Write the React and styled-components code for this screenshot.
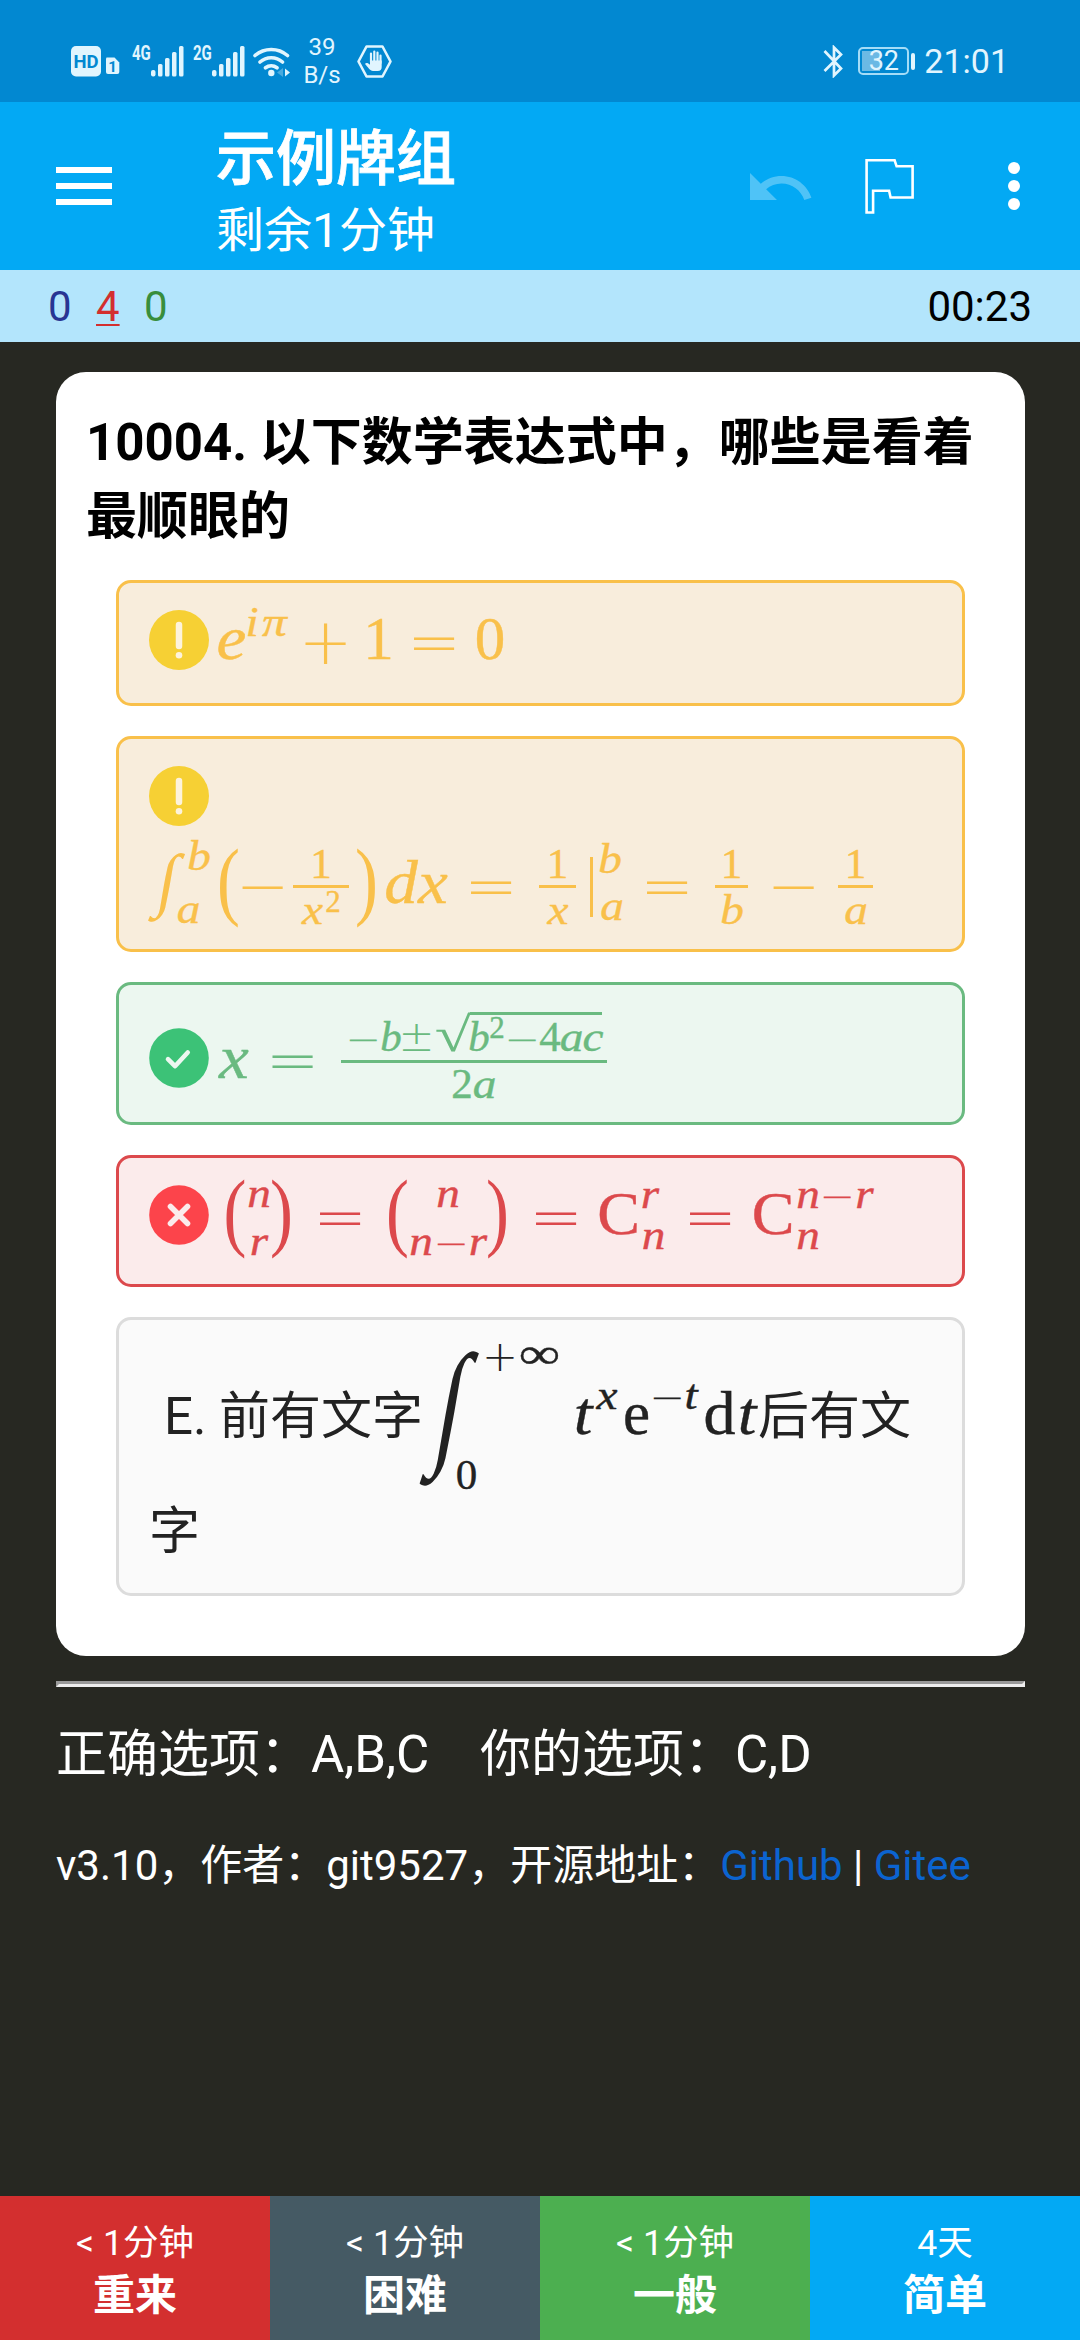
import React from "react";
import styled, { createGlobalStyle } from "styled-components";

const sans = `Roboto, "Noto Sans CJK SC", sans-serif`;

const GlobalStyle = createGlobalStyle`
  * { box-sizing: border-box; }
  body { margin: 0; background: #272822; }
`;

const Screen = styled.div`
  display: flex;
  flex-direction: column;
  width: 1080px;
  height: 2340px;
  background: #272822;
  font-family: ${sans};
  color: #fff;
  overflow: hidden;
`;

/* ---------- status bar ---------- */
const StatusBar = styled.header`
  display: flex;
  align-items: center;
  height: 102px;
  padding: 20px 71px 0 71px;
  background: #0288d1;
  color: #e1f5fe;
`;
const StatusIcon = styled.svg`
  display: block;
  flex: none;
  margin-left: ${(p) => p.$gap || 0}px;
`;
const NetTag = styled.span`
  width: 19px;
  margin-left: ${(p) => p.$gap}px;
  align-self: flex-start;
  margin-top: 23px;
  font-size: 20px;
  font-weight: 700;
  line-height: 20px;
  white-space: nowrap;
  transform: scaleX(0.75);
  transform-origin: left;
`;
const Speed = styled.div`
  width: 40px;
  margin-left: 11px;
  font-size: 24px;
  line-height: 28px;
  text-align: center;
`;
const Spacer = styled.div`
  flex: 1;
`;
const Battery = styled.div`
  display: flex;
  align-items: center;
  justify-content: center;
  width: 51px;
  height: 28px;
  margin-left: 14px;
  border: 2px solid #a5dcf7;
  border-radius: 5px;
  background: linear-gradient(90deg, #6bb9e4 18px, transparent 18px) no-repeat 2px 2px / 40px 20px;
  font-size: 27px;
  line-height: 24px;
`;
const BatteryCap = styled.div`
  width: 4px;
  height: 17px;
  margin-left: 2px;
  border-radius: 2px;
  background: #e1f5fe;
`;
const Clock = styled.span`
  margin-left: 9px;
  font-size: 34px;
  line-height: 40px;
`;

/* ---------- toolbar ---------- */
const Toolbar = styled.div`
  display: flex;
  align-items: center;
  height: 168px;
  padding: 0 60px 0 56px;
  background: #03a9f4;
`;
const MenuButton = styled.div`
  display: grid;
  gap: 10px;
  width: 56px;
  margin-right: 104px;
`;
const MenuBar = styled.span`
  height: 6px;
  background: #fff;
`;
const Titles = styled.div`
  flex: 1;
  padding-top: 10px;
`;
const DeckTitle = styled.h1`
  margin: 0;
  font-size: 60px;
  font-weight: 500;
  line-height: 80px;
  -webkit-text-stroke: 0.8px currentColor;
`;
const DeckSubtitle = styled.div`
  font-size: 48px;
  line-height: 62px;
`;
const Action = styled.svg`
  display: block;
  margin-left: ${(p) => p.$gap || 0}px;
`;

/* ---------- counters ---------- */
const Counters = styled.div`
  display: flex;
  align-items: center;
  gap: 24.4px;
  height: 72px;
  padding: 2px 48px 0;
  background: #b3e5fc;
  font-size: 42px;
  line-height: 50px;
`;
const Count = styled.span`
  color: ${(p) => p.$color};
  text-decoration: ${(p) => (p.$active ? "underline" : "none")};
  text-decoration-thickness: 2px;
  text-underline-offset: 3px;
`;
const Timer = styled.span`
  margin-left: auto;
  color: #000;
`;

/* ---------- card ---------- */
const Content = styled.main`
  flex: 1;
  padding: 30px 55px 0 56px;
`;
const Card = styled.section`
  height: 1284px;
  padding: 34px 30px 0;
  border-radius: 30px;
  background: #fff;
`;
const Question = styled.h2`
  margin: 0 0 26px;
  color: #000;
  font-size: 51px;
  font-weight: 700;
  line-height: 74px;
`;
const Options = styled.div`
  display: grid;
  gap: 30px;
  padding: 0 30px;
`;
const tones = {
  missed: ["#f9c04a", "#f8eddc"],
  right: ["#6aba80", "#ecf7f0"],
  wrong: ["#dc494c", "#fbebeb"],
  plain: ["#dcdcdc", "#fafafa"],
};
const Option = styled.div`
  display: flex;
  flex-wrap: wrap;
  align-items: flex-start;
  align-content: flex-start;
  height: ${(p) => p.$height}px;
  padding: 27px 27px 27px 30px;
  border: 3px solid ${(p) => tones[p.$tone][0]};
  border-radius: 15px;
  background: ${(p) => tones[p.$tone][1]};
  color: ${(p) => (p.$tone === "plain" ? "#222" : tones[p.$tone][0])};
`;
const Mark = styled.svg`
  display: block;
  flex: none;
  margin-top: ${(p) => p.$top || 0}px;
`;

/* ---------- formulas: everything hangs from one baseline ---------- */
const Formula = styled.div`
  flex: ${(p) => (p.$full ? "0 0 100%" : "0 0 auto")};
  height: ${(p) => p.$height}px;
  font-family: "Liberation Serif", serif;
  font-size: 60px;
  line-height: 0;
  white-space: nowrap;
  &::before {
    content: "";
    display: inline-block;
    width: 0;
    height: ${(p) => p.$ascent}px;
  }
`;
const Glyph = styled.span`
  display: inline-flex;
  justify-content: center;
  width: ${(p) => p.$w}px;
  margin-left: ${(p) => p.$g || 0}px;
  vertical-align: ${(p) => p.$up || 0}px;
  font-size: ${(p) => (p.$small ? 43 : p.$tiny ? 31 : 61)}px;
  transform: scaleX(${(p) => p.$sx || 1});
  -webkit-text-stroke: 0.4px currentColor;
`;
const Var = styled(Glyph)`
  font-style: italic;
  transform: scaleX(${(p) => p.$sx || 1.1});
`;
const Op = styled(Glyph)`
  font-family: "DejaVu Sans", sans-serif;
  font-weight: 200;
  font-size: ${(p) => (p.$small ? 43 : 64)}px;
  vertical-align: ${(p) => (p.$up || 0) - (p.$small ? 3 : 4.5)}px;
  -webkit-text-stroke: 0;
`;
const Big = styled(Glyph)`
  font-size: ${(p) => p.$size}px;
  -webkit-text-stroke: 0;
`;
const Integral = styled(Big)`
  transform: skewX(-10deg) scaleX(${(p) => p.$sx});
`;
const Stack = styled.span`
  display: inline-block;
  width: ${(p) => p.$w}px;
  margin-left: ${(p) => p.$g || 0}px;
`;
const Level = styled.span`
  display: inline-block;
  width: 100%;
  margin-right: -100%;
  text-align: ${(p) => p.$align || "center"};
  vertical-align: ${(p) => p.$up}px;
`;
const Rule = styled.span`
  display: inline-block;
  width: ${(p) => p.$w}px;
  height: ${(p) => p.$h || 3}px;
  margin-left: ${(p) => p.$g || 0}px;
  margin-right: ${(p) => (p.$over ? -p.$w : 0)}px;
  vertical-align: ${(p) => p.$up}px;
  background: currentColor;
`;
const Words = styled.span`
  display: inline-block;
  width: ${(p) => (p.$w ? `${p.$w}px` : "auto")};
  margin-left: ${(p) => p.$g || 0}px;
  font-family: ${sans};
  font-size: 51px;
`;

const Equals = ({ g, w = 40 }) => <Op $g={g} $w={w}>=</Op>;
const Frac = ({ g, w, num, den }) => (
  <Stack $g={g} $w={w}>
    <Level $up={25}>{num}</Level>
    <Rule $w={w} $up={15} $over />
    <Level $up={-20.5}>{den}</Level>
  </Stack>
);
const Paren = ({ g, w = 17, children }) => (
  <Big $g={g} $w={w} $up={-5.5} $size={86} $sx={0.8}>{children}</Big>
);

/* ---------- marks ---------- */
const MissedMark = () => (
  <Mark width="60" height="60" viewBox="0 0 60 60">
    <circle cx="30" cy="30" r="30" fill="#f6d034" />
    <path d="M30 15v21" stroke="#fdf3dc" strokeWidth="6.5" strokeLinecap="round" />
    <circle cx="30" cy="45.3" r="3.3" fill="#fdf3dc" />
  </Mark>
);
const RightMark = () => (
  <Mark $top={16} width="60" height="60" viewBox="0 0 60 60">
    <circle cx="30" cy="30" r="29.8" fill="#3cc277" />
    <path d="M19 31.2l7 7L38.700 24.500" fill="none" stroke="#ecf7f0" strokeWidth="4.6" strokeLinecap="round" strokeLinejoin="round" />
  </Mark>
);
const WrongMark = () => (
  <Mark width="60" height="60" viewBox="0 0 60 60">
    <circle cx="30" cy="30" r="29.8" fill="#fc444b" />
    <path d="M21.500 21.500l17 17M38.500 21.500l-17 17" stroke="#fbebeb" strokeWidth="5.6" strokeLinecap="round" />
  </Mark>
);

const SignalBars = () => (
  <StatusIcon width="34" height="31" viewBox="0 0 34 31" fill="#e1f5fe">
    <rect x="0" y="24" width="4.500" height="6.500" rx="2" />
    <rect x="7" y="18" width="4.500" height="12.500" rx="1.500" />
    <rect x="14" y="12" width="4.500" height="18.500" rx="1.500" />
    <rect x="21" y="6" width="4.500" height="24.500" rx="1.500" />
    <rect x="28" y="0" width="4.500" height="30.500" rx="1.500" />
  </StatusIcon>
);

/* ---------- below the card ---------- */
const Divider = styled.hr`
  height: 6px;
  margin: 25px 0 0;
  border: 3px solid;
  border-color: #9a9a9a #eee #eee #9a9a9a;
`;
const Answers = styled.p`
  margin: 37px 0 0;
  font-size: 51px;
  line-height: 62px;
  white-space: pre;
`;
const Credits = styled.p`
  margin: 53px 0 0;
  font-size: 42px;
  line-height: 54px;
  white-space: nowrap;
`;
const Link = styled.a`
  color: #0b64d0;
`;

/* ---------- answer buttons ---------- */
const Ease = styled.footer`
  display: grid;
  grid-template-columns: repeat(4, 1fr);
  height: 144px;
`;
const EaseButton = styled.div`
  display: flex;
  flex-direction: column;
  align-items: center;
  gap: 1px;
  padding-top: 22px;
  background: ${(p) => p.$color};
`;
const Interval = styled.span`
  font-size: 35.500px;
  line-height: 50px;
`;
const EaseLabel = styled.span`
  font-size: 42px;
  font-weight: 700;
  line-height: 54px;
`;

const easeButtons = [
  ["#d32f2f", "< 1分钟", "重来"],
  ["#455a64", "< 1分钟", "困难"],
  ["#4caf50", "< 1分钟", "一般"],
  ["#03a9f4", "4天", "简单"],
];

export default function App() {
  return (
    <Screen>
      <GlobalStyle />
      <StatusBar>
        <StatusIcon width="49" height="31" viewBox="0 0 49 31">
          <rect width="30" height="30.500" rx="5" fill="#e1f5fe" />
          <text x="15" y="22" textAnchor="middle" fontFamily="Roboto" fontWeight="700" fontSize="18.500" fill="#0288d1">HD</text>
          <path d="M35.500 11.500h8l4.800 5v9.500a2 2 0 0 1-2 2H37a2 2 0 0 1-2-2V13z" fill="#e1f5fe" />
          <text x="41.500" y="25.500" textAnchor="middle" fontFamily="Roboto" fontWeight="700" fontSize="15" fill="#0288d1">1</text>
        </StatusIcon>
        <NetTag $gap={12}>4G</NetTag>
        <SignalBars />
        <NetTag $gap={8}>2G</NetTag>
        <SignalBars />
        <StatusIcon $gap={7} width="38" height="31" viewBox="0 0 38 31" fill="none" stroke="#e1f5fe" strokeWidth="3.600" strokeLinecap="round">
          <path d="M2 9.500a25 25 0 0 1 32.500 0M7 16a17 17 0 0 1 22.500 0M12.500 21.800a9.500 9.500 0 0 1 11.500 0" />
          <circle cx="18.300" cy="27" r="3.200" fill="#e1f5fe" stroke="none" />
          <path d="M30 22v9l-6-4.500z" fill="#4aaade" stroke="none" />
          <path d="M32 22.500v8l5-4z" fill="#e1f5fe" stroke="none" />
        </StatusIcon>
        <Speed>39<br />B/s</Speed>
        <StatusIcon $gap={15} width="35" height="33" viewBox="0 0 35 33">
          <path d="M9.500 1.500h16L33.500 16.500l-8 15h-16l-8-15z" fill="none" stroke="#e1f5fe" strokeWidth="2.600" strokeLinejoin="round" />
          <path d="M14 17V8.500M17.300 17V6.500M20.500 17V7.500M23.500 18v-7.500" stroke="#e1f5fe" strokeWidth="2.200" strokeLinecap="round" />
          <path d="M13 15.500h11.700V22a4 4 0 0 1-4 4H16c-3 0-5.500-4.500-8-7 .8-1.500 3-1.200 5 .8z" fill="#e1f5fe" />
        </StatusIcon>
        <Spacer />
        <StatusIcon width="21" height="33" viewBox="0 0 21 33">
          <path d="M1.500 6l16.500 17.500L11 30.500V2.500l7 7L1.500 26" fill="none" stroke="#e1f5fe" strokeWidth="2.700" />
        </StatusIcon>
        <Battery>32</Battery>
        <BatteryCap />
        <Clock>21:01</Clock>
      </StatusBar>

      <Toolbar>
        <MenuButton>
          <MenuBar />
          <MenuBar />
          <MenuBar />
        </MenuButton>
        <Titles>
          <DeckTitle>示例牌组</DeckTitle>
          <DeckSubtitle>剩余1分钟</DeckSubtitle>
        </Titles>
        <Action width="62" height="27" viewBox="2 7 20.670 9" fill="#fff" fillOpacity="0.300">
          <path d="M12.500 8c-2.650 0-5.050.990-6.900 2.600L2 7v9h9l-3.620-3.620c1.390-1.160 3.160-1.880 5.120-1.880 3.540 0 6.550 2.310 7.600 5.500l2.370-.780C21.080 11.030 17.150 8 12.500 8z" />
        </Action>
        <Action $gap={53} width="50" height="56" viewBox="0 0 50 56" fill="none" stroke="#fff" strokeWidth="2.600">
          <path d="M1.600 2.300h28l2 6h16v31.200h-22l-1.500-6.700h-16v21.700H1.600z" />
        </Action>
        <Action $gap={93} width="12" height="48" viewBox="0 0 12 48" fill="#fff">
          <circle cx="6" cy="6" r="6" />
          <circle cx="6" cy="24" r="6" />
          <circle cx="6" cy="42" r="6" />
        </Action>
      </Toolbar>

      <Counters>
        <Count $color="#283593">0</Count>
        <Count $color="#d32f2f" $active>4</Count>
        <Count $color="#388e3c">0</Count>
        <Timer>00:23</Timer>
      </Counters>

      <Content>
        <Card>
          <Question>10004. 以下数学表达式中，哪些是看着<br />最顺眼的</Question>
          <Options>
            <Option $tone="missed" $height={126}>
              <MissedMark />
              <Formula $ascent={49} $height={66}>
                <Var $g={10} $w={25}>e</Var>
                <Var $small $g={2} $w={12} $up={23}>i</Var>
                <Var $small $g={6} $w={21} $up={23} $sx={1.15}>π</Var>
                <Op $g={20} $w={41}>+</Op>
                <Glyph $g={21} $w={23}>1</Glyph>
                <Equals g={24} />
                <Glyph $g={23} $w={26}>0</Glyph>
              </Formula>
            </Option>

            <Option $tone="missed" $height={216}>
              <MissedMark />
              <Formula $full $ascent={77} $height={96}>
                <Integral $g={2} $w={34} $up={0} $size={70} $sx={0.95}>∫</Integral>
                <Var $small $g={5} $w={18} $up={33}>b</Var>
                <Var $small $g={-30} $w={21} $up={-20}>a</Var>
                <Paren g={21}>(</Paren>
                <Op $g={7} $w={37}>−</Op>
                <Frac
                  g={12}
                  w={56}
                  num={<Glyph $small $w={16}>1</Glyph>}
                  den={<><Var $small $w={21}>x</Var><Glyph $tiny $g={3} $w={14} $up={12}>2</Glyph></>}
                />
                <Paren g={9}>)</Paren>
                <Var $g={11} $w={30}>d</Var>
                <Var $g={2} $w={30}>x</Var>
                <Equals g={23} />
                <Frac g={28} w={37} num={<Glyph $small $w={16}>1</Glyph>} den={<Var $small $w={22}>x</Var>} />
                <Rule $g={14} $w={3} $h={60} $up={-14} />
                <Var $small $g={8} $w={18} $up={30}>b</Var>
                <Var $small $g={-18} $w={22} $up={-17}>a</Var>
                <Equals g={24} />
                <Frac g={28} w={33} num={<Glyph $small $w={16}>1</Glyph>} den={<Var $small $w={18}>b</Var>} />
                <Op $g={27} $w={37}>−</Op>
                <Frac g={26} w={35} num={<Glyph $small $w={16}>1</Glyph>} den={<Var $small $w={22}>a</Var>} />
              </Formula>
            </Option>

            <Option $tone="right" $height={143}>
              <RightMark />
              <Formula $ascent={65} $height={83}>
                <Var $g={10} $w={30}>x</Var>
                <Equals g={23} w={41} />
                <Stack $g={28} $w={266}>
                  <Level $up={26.5} $align="left">
                    <Op $small $g={9} $w={26}>−</Op>
                    <Var $small $g={6} $w={18} $sx={1}>b</Var>
                    <Op $small $g={2} $w={29} $up={3}>±</Op>
                    <Big $g={5} $w={34} $size={49} $sx={1.35}>√</Big>
                    <Rule $w={132} $up={36} $over />
                    <Var $small $w={18} $sx={1}>b</Var>
                    <Glyph $tiny $g={2} $w={14} $up={12.7}>2</Glyph>
                    <Op $small $g={5} $w={26}>−</Op>
                    <Glyph $small $g={5} $w={20}>4</Glyph>
                    <Var $small $g={1} $w={21}>a</Var>
                    <Var $small $g={2} $w={18}>c</Var>
                  </Level>
                  <Rule $w={266} $up={15} $over />
                  <Level $up={-20}>
                    <Glyph $small $w={18}>2</Glyph>
                    <Var $small $g={3} $w={21}>a</Var>
                  </Level>
                </Stack>
              </Formula>
            </Option>

            <Option $tone="wrong" $height={132}>
              <WrongMark />
              <Formula $ascent={49} $height={72}>
                <Paren g={18} w={16}>(</Paren>
                <Stack $g={4} $w={24}>
                  <Level $up={27.5}><Var $small $w={24}>n</Var></Level>
                  <Level $up={-20.5}><Var $small $w={18}>r</Var></Level>
                </Stack>
                <Paren g={2}>)</Paren>
                <Equals g={30} />
                <Paren g={29}>(</Paren>
                <Stack $g={3} $w={78}>
                  <Level $up={27.5}><Var $small $w={24}>n</Var></Level>
                  <Level $up={-20.5}>
                    <Var $small $w={24}>n</Var>
                    <Op $small $g={5} $w={26}>−</Op>
                    <Var $small $g={5} $w={18}>r</Var>
                  </Level>
                </Stack>
                <Paren g={2}>)</Paren>
                <Equals g={30} />
                <Glyph $g={24} $w={37} $sx={1.05}>C</Glyph>
                <Stack $g={4} $w={25}>
                  <Level $up={26} $align="left"><Var $small $w={18}>r</Var></Level>
                  <Level $up={-14.5} $align="left"><Var $small $w={25}>n</Var></Level>
                </Stack>
                <Equals g={24} />
                <Glyph $g={24} $w={38} $sx={1.05}>C</Glyph>
                <Stack $g={4} $w={77}>
                  <Level $up={26} $align="left">
                    <Var $small $w={24}>n</Var>
                    <Op $small $g={4} $w={26}>−</Op>
                    <Var $small $g={6} $w={17}>r</Var>
                  </Level>
                  <Level $up={-14.5} $align="left"><Var $small $w={24}>n</Var></Level>
                </Stack>
              </Formula>
            </Option>

            <Option $tone="plain" $height={279}>
              <Formula $full $ascent={87} $height={115}>
                <Words $g={15} $w={259}>E. 前有文字</Words>
                <Integral $g={2} $w={54} $up={-14.5} $size={137} $sx={0.7}>∫</Integral>
                <Op $small $g={7} $w={28} $up={66}>+</Op>
                <Glyph $small $g={6} $w={39} $up={66} $sx={1.35}>∞</Glyph>
                <Glyph $small $g={-102} $w={19} $up={-55}>0</Glyph>
                <Var $g={98} $w={18}>t</Var>
                <Var $small $g={4} $w={22} $up={25.5}>x</Var>
                <Glyph $g={6} $w={25}>e</Glyph>
                <Op $small $g={5} $w={26} $up={25.5}>−</Op>
                <Var $small $g={4} $w={14} $up={25.5}>t</Var>
                <Glyph $g={6} $w={31} $sx={1.05}>d</Glyph>
                <Var $g={2} $w={20}>t</Var>
                <Words $g={1}>后有文</Words>
              </Formula>
              <Formula $full $ascent={87} $height={104}>
                <Words>字</Words>
              </Formula>
            </Option>
          </Options>
        </Card>

        <Divider />
        <Answers>{"正确选项：A,B,C\u00a0\u00a0\u00a0\u00a0你的选项：C,D"}</Answers>
        <Credits>
          v3.10，作者：git9527，开源地址：<Link>Github</Link> | <Link>Gitee</Link>
        </Credits>
      </Content>

      <Ease>
        {easeButtons.map(([color, interval, label]) => (
          <EaseButton key={label} $color={color}>
            <Interval>{interval}</Interval>
            <EaseLabel>{label}</EaseLabel>
          </EaseButton>
        ))}
      </Ease>
    </Screen>
  );
}
